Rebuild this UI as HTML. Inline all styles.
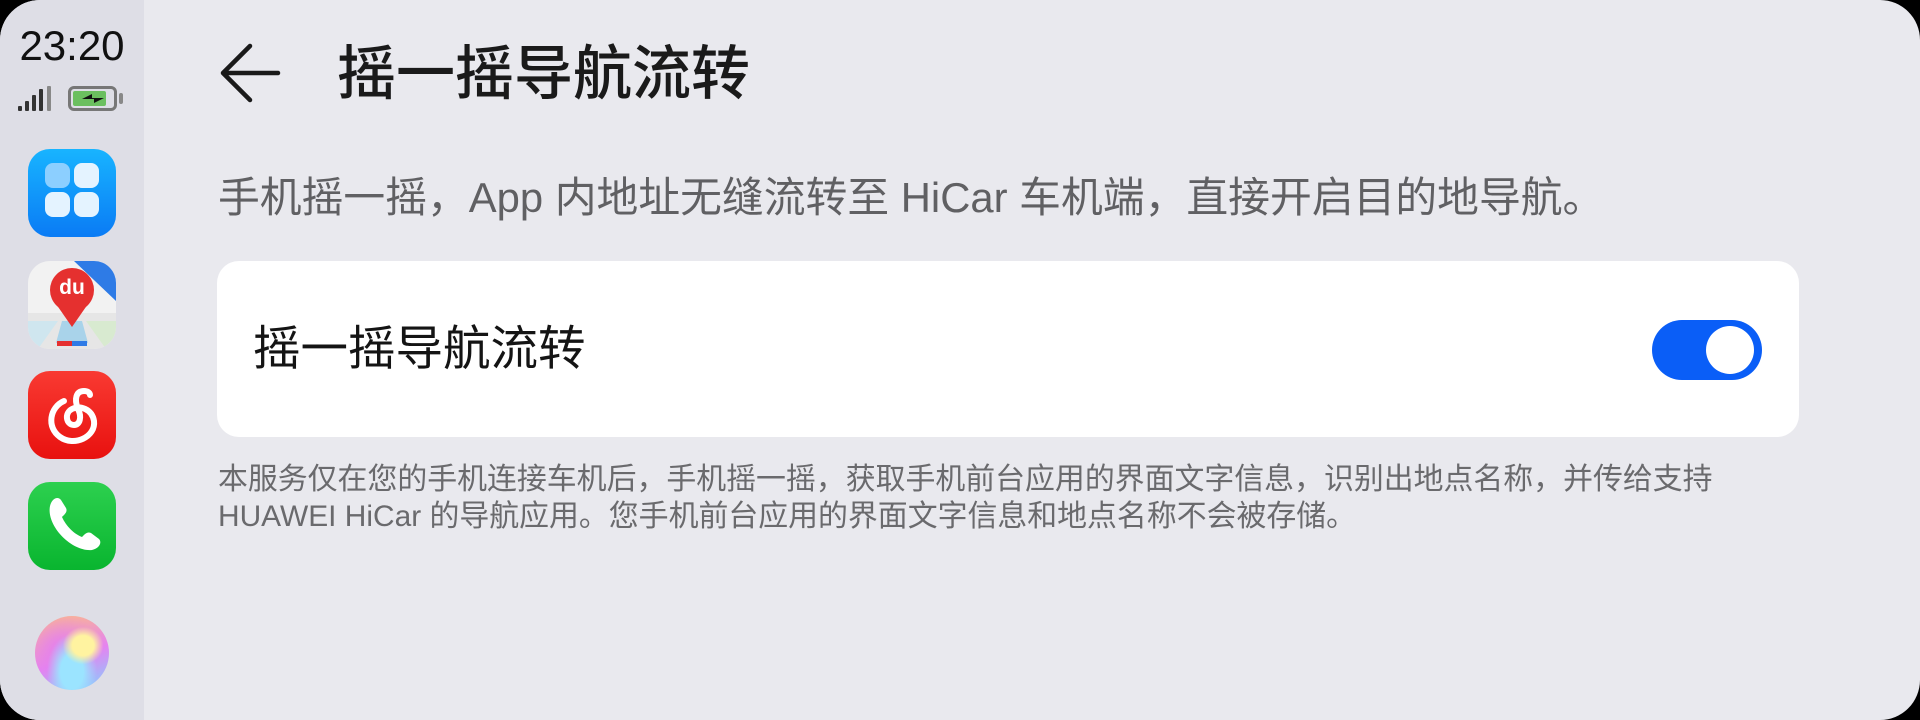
<!DOCTYPE html>
<html><head><meta charset="utf-8"><style>
*{margin:0;padding:0;box-sizing:border-box}
body{width:1920px;height:720px;background:#000;overflow:hidden;font-family:"Liberation Sans","Noto Sans CJK SC",sans-serif}
.screen{position:absolute;left:0;top:0;width:1920px;height:720px;background:#e9e9ee;border-radius:40px;overflow:hidden}
.side{position:absolute;left:0;top:0;width:144px;height:720px;background:#dedee6}
.time{position:absolute;left:0;width:144px;top:22px;text-align:center;font-size:42px;color:#111}
.icon{position:absolute;left:28px;width:88px;height:88px;border-radius:22px;overflow:hidden}
.abs{position:absolute}
</style></head><body>
<div class="screen">
 <div class="side">
  <div class="time">23:20</div>
  <div class="abs" style="left:18px;top:106px;width:4px;height:5px;background:#333;border-radius:1px"></div>
  <div class="abs" style="left:25px;top:101px;width:4px;height:10px;background:#333;border-radius:1px"></div>
  <div class="abs" style="left:32px;top:95px;width:4px;height:16px;background:#333;border-radius:1px"></div>
  <div class="abs" style="left:39px;top:89px;width:4px;height:22px;background:#333;border-radius:1px"></div>
  <div class="abs" style="left:47px;top:86px;width:4px;height:25px;background:#888;border-radius:1px"></div>
  <div class="abs" style="left:68px;top:86px;width:49px;height:25px;border:3px solid #777;border-radius:6px"></div>
  <div class="abs" style="left:73px;top:91px;width:33px;height:15px;background:#6bbf5f;border-radius:2px"></div>
  <div class="abs" style="left:119px;top:93px;width:4px;height:11px;background:#888;border-radius:2px"></div>
  <svg class="abs" style="left:78px;top:91px" width="30" height="15"><path d="M4 8 L14 3 L14 7 L26 7 L16 12 L16 8 Z" fill="#111"/></svg>
  <div class="icon" style="top:149px;background:linear-gradient(180deg,#18b4ff,#0a7bf5)">
   <div class="abs" style="left:17px;top:14px;width:25px;height:25px;border-radius:8px;background:#8ccfff"></div>
   <div class="abs" style="left:46px;top:14px;width:25px;height:25px;border-radius:8px;background:#e4f3ff"></div>
   <div class="abs" style="left:17px;top:43px;width:25px;height:25px;border-radius:8px;background:#e4f3ff"></div>
   <div class="abs" style="left:46px;top:43px;width:25px;height:25px;border-radius:8px;background:#e4f3ff"></div>
  </div>
  <div class="icon" style="top:261px;background:#f2f2f2">
   <svg class="abs" style="left:0;top:0" width="88" height="88">
    <path d="M0 52 L88 52 L88 88 L0 88 Z" fill="#e6e6e6"/>
    <path d="M0 60 L30 60 L10 88 L0 88 Z" fill="#cfe6ef"/>
    <path d="M58 60 L88 60 L88 88 L78 88 Z" fill="#d8ead0"/>
    <path d="M34 60 L54 60 L60 82 L28 82 Z" fill="#a9d3ea"/>
    <path d="M46 0 L88 0 L88 40 Z" fill="#2e7be6"/>
    <circle cx="44" cy="29" r="22" fill="#e5302f"/>
    <path d="M26 40 L44 66 L62 40 Z" fill="#e5302f"/>
    <rect x="29" y="80" width="15" height="5" fill="#e5302f"/><rect x="44" y="80" width="15" height="5" fill="#2e7be6"/>
   </svg>
   <div class="abs" style="left:22px;top:16px;width:44px;text-align:center;color:#fff;font-weight:bold;font-size:21px;line-height:22px">du</div>
  </div>
  <div class="icon" style="top:371px;background:linear-gradient(180deg,#f93a32,#e8110f)">
   <svg class="abs" style="left:0;top:0" width="88" height="88"><path d="M36 30 C22 36 18 56 32 66 C46 76 68 66 66 50 C64 38 52 34 44 38 C36 42 38 54 46 54 C52 54 54 46 50 38 C46 28 48 20 56 20 C60 20 62 22 62 24" fill="none" stroke="#fff" stroke-width="6" stroke-linecap="round"/></svg>
  </div>
  <div class="icon" style="top:482px;background:linear-gradient(180deg,#2dd04f,#09b52f)">
   <svg class="abs" style="left:0;top:0" width="88" height="88"><path d="M22 24 C24 16 30 14 33 18 L38 26 C40 30 36 33 34 35 C38 44 46 52 54 55 C56 53 59 49 63 51 L71 57 C74 60 72 66 64 68 C44 70 18 44 22 24 Z" fill="#fff"/></svg>
  </div>
  <div class="abs" style="left:35px;top:616px;width:74px;height:74px;border-radius:50%;background:radial-gradient(ellipse at 65% 40%,#fff3a0 0 16%,transparent 30%),radial-gradient(ellipse at 50% 75%,#9be4ff 0 22%,transparent 48%),radial-gradient(circle at 35% 45%,#e47ef0,transparent 60%),linear-gradient(160deg,#ffc27a,#e583f0 55%,#7fd3ff)"></div>
 </div>

 <svg class="abs" style="left:218px;top:40px" width="70" height="66"><path d="M60 33 L6 33 M32 6 L5 33 L32 60" fill="none" stroke="#1a1a1a" stroke-width="4.5" stroke-linecap="round" stroke-linejoin="round"/></svg>
 <div class="abs" style="left:337px;top:38px;font-size:59px;line-height:72px;font-weight:500;color:#1a1a1a">摇一摇导航流转</div>

 <div class="abs" style="left:218px;top:174px;font-size:41.8px;line-height:48px;color:#606063;white-space:nowrap">手机摇一摇，App 内地址无缝流转至 HiCar 车机端，直接开启目的地导航。</div>

 <div class="abs" style="left:217px;top:261px;width:1582px;height:176px;background:#fff;border-radius:22px">
  <div class="abs" style="left:36px;top:61px;font-size:47.5px;line-height:56px;color:#141414">摇一摇导航流转</div>
  <div class="abs" style="left:1435px;top:59px;width:110px;height:60px;border-radius:30px;background:#0a5ef7">
   <div class="abs" style="left:54px;top:6px;width:48px;height:48px;border-radius:50%;background:#fff"></div>
  </div>
 </div>

 <div class="abs" style="left:218px;top:461px;font-size:29.9px;line-height:37px;color:#6a6a6d;white-space:nowrap">本服务仅在您的手机连接车机后，手机摇一摇，获取手机前台应用的界面文字信息，识别出地点名称，并传给支持<br>HUAWEI HiCar 的导航应用。您手机前台应用的界面文字信息和地点名称不会被存储。</div>
</div>
</body></html>
